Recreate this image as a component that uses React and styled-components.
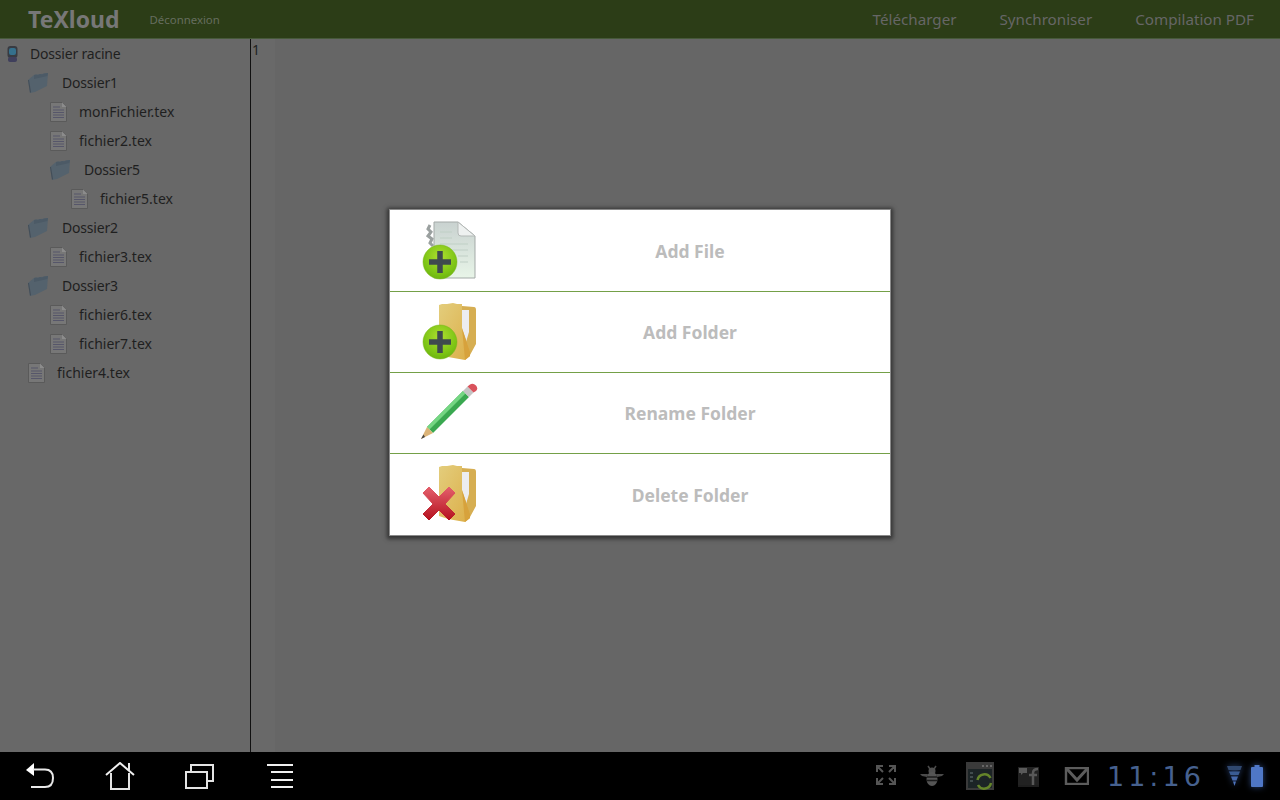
import React from "react";
import styled, { createGlobalStyle } from "styled-components";

const GlobalStyle = createGlobalStyle`
  html, body {
    margin: 0;
    padding: 0;
    height: 100%;
    background: #666;
    font-family: "Noto Sans", "Open Sans", sans-serif;
  }
  #root {
    height: 100%;
  }
`;

const tree = [
  { depth: 0, type: "root", name: "Dossier racine" },
  { depth: 1, type: "folder", name: "Dossier1" },
  { depth: 2, type: "file", name: "monFichier.tex" },
  { depth: 2, type: "file", name: "fichier2.tex" },
  { depth: 2, type: "folder", name: "Dossier5" },
  { depth: 3, type: "file", name: "fichier5.tex" },
  { depth: 1, type: "folder", name: "Dossier2" },
  { depth: 2, type: "file", name: "fichier3.tex" },
  { depth: 1, type: "folder", name: "Dossier3" },
  { depth: 2, type: "file", name: "fichier6.tex" },
  { depth: 2, type: "file", name: "fichier7.tex" },
  { depth: 1, type: "file", name: "fichier4.tex" },
];

const RootIcon = () => (
  <svg width="15" height="18" viewBox="0 0 15 18">
    <rect x="2.5" y="1" width="10" height="12" rx="3" fill="#383b42" />
    <rect x="4" y="3" width="7" height="7" rx="2" fill="#35708c" />
    <rect x="3" y="12" width="9" height="5" rx="2" fill="#3f3f5c" />
  </svg>
);

const SmallFolderIcon = () => (
  <svg width="22" height="22" viewBox="0 0 22 22">
    <path d="M1 8 L7 3 L21 1 L20 14 L8 20 L3 21 Z" fill="#54626d" />
    <path d="M7 3 L9 2.5 L11 3 L13 2 L15 2.4 L17 1.5 L21 1 L20.4 4 L7 7 Z" fill="#4c5a66" />
    <path d="M1 8 L2 8 L4 20 L3 21 Z" fill="#434e58" />
  </svg>
);

const SmallFileIcon = () => (
  <svg width="17" height="20" viewBox="0 0 17 20">
    <path d="M0.5 0.5 H12 L16.5 5 V19.5 H0.5 Z" fill="#777" stroke="#5a5a5a" />
    <path d="M12 0.5 V5 H16.5 Z" fill="#8c8c8c" />
    <path d="M3 5 H10 M3 8 H14 M3 10.5 H14 M3 13 H14 M3 15.5 H14" stroke="#56566a" strokeWidth="1" />
  </svg>
);

const treeIcons = { root: RootIcon, folder: SmallFolderIcon, file: SmallFileIcon };

const PlusBadge = ({ cy }) => (
  <g>
    <circle cx="20" cy={cy} r="17" fill="url(#greenBall)" stroke="#78b41c" strokeWidth="0.5" />
    <path d={`M9 ${cy} H31 M20 ${cy - 11} V${cy + 11}`} stroke="#3f4a4e" strokeWidth="5.5" />
  </g>
);

const Defs = () => (
  <defs>
    <radialGradient id="greenBall" cx="50%" cy="35%" r="70%">
      <stop offset="0%" stopColor="#aede30" />
      <stop offset="70%" stopColor="#7cc414" />
      <stop offset="100%" stopColor="#68b00e" />
    </radialGradient>
    <linearGradient id="folderFront" x1="0" y1="0" x2="1" y2="1">
      <stop offset="0%" stopColor="#e3cd7c" />
      <stop offset="100%" stopColor="#dcae48" />
    </linearGradient>
    <linearGradient id="sheet" x1="0" y1="0" x2="0" y2="1">
      <stop offset="0%" stopColor="#c9d2d0" />
      <stop offset="100%" stopColor="#e8f5e8" />
    </linearGradient>
    <linearGradient id="redCross" x1="0" y1="0" x2="0" y2="1">
      <stop offset="0%" stopColor="#e4606c" />
      <stop offset="100%" stopColor="#b5121f" />
    </linearGradient>
  </defs>
);

const AddFileIcon = () => (
  <svg width="60" height="62" viewBox="0 0 60 62">
    <Defs />
    <path d="M10 4 L8 8 L11 11 L8 15 L12 18 L10 22 L13 25" fill="none" stroke="#9aa09f" strokeWidth="3" />
    <path d="M14 1 H38 L55 15 V57 H14 Z" fill="url(#sheet)" stroke="#a3a9a7" />
    <path d="M38 1 L55 15 H41 Q38 15 38 12 Z" fill="#eef1f0" stroke="#b4b9b7" />
    <path d="M20 11 H32 M20 17 H32 M20 23 H48 M20 29 H48 M38 35 H48 M40 41 H48" stroke="#bfcfc5" strokeWidth="1.2" />
    <PlusBadge cy={41} />
  </svg>
);

const FolderShape = () => (
  <g>
    <path d="M42 4 L54 5 Q56 5 56 8 V42 L50 53 L42 40 Z" fill="#d6ae52" />
    <path d="M42 8 H49 V30 L46 40 H42 Z" fill="#ecedf0" />
    <path d="M19 3 L22 2 L27 2 L33 1 L37 2 L42 2 V26 L50 50 V54 L45 58 L28 55 L19 52 Z" fill="url(#folderFront)" />
    <path d="M42 26 L50 50 V54 L45 58 Z" fill="#d7a23c" />
  </g>
);

const AddFolderIcon = () => (
  <svg width="60" height="62" viewBox="0 0 60 62">
    <Defs />
    <FolderShape />
    <PlusBadge cy={40} />
  </svg>
);

const PencilIcon = () => (
  <svg width="60" height="62" viewBox="0 0 60 62">
    <path d="M7 44 L43 8 L49 14 L13 50 Z" fill="#3aa850" />
    <path d="M7 44 L43 8 L45.5 10.5 L9.5 46.5 Z" fill="#74d682" />
    <path d="M7 44 L13 50 L1 56 Z" fill="#dcb478" />
    <path d="M3.5 51.5 L5 54 L1 56 Z" fill="#444" />
    <path d="M43 8 L47.5 3.5 L53.5 9.5 L49 14 Z" fill="#c4c4c4" />
    <path d="M47.5 3.5 L50 1.5 Q53 -0.5 56 2.5 Q58.5 5.5 56 8 L53.5 9.5 Z" fill="#d9535c" />
  </svg>
);

const DeleteFolderIcon = () => (
  <svg width="60" height="62" viewBox="0 0 60 62">
    <Defs />
    <FolderShape />
    <path
      d="M3 29 L9 23 L19 33 L29 23 L35 29 L25 40 L35 50 L29 56 L19 46 L9 56 L3 50 L13 40 Z"
      fill="url(#redCross)"
      stroke="url(#redCross)"
      strokeLinejoin="round"
    />
  </svg>
);

const menuItems = [
  { label: "Add File", Icon: AddFileIcon },
  { label: "Add Folder", Icon: AddFolderIcon },
  { label: "Rename Folder", Icon: PencilIcon },
  { label: "Delete Folder", Icon: DeleteFolderIcon },
];

const BackIcon = () => (
  <svg width="30" height="28" viewBox="0 0 30 28">
    <path d="M1 8 L9 1 V14 Z" fill="#fff" />
    <path d="M8 7.5 H20 Q28 7.5 28 16 Q28 25 20 25 H6" fill="none" stroke="#e8e8e8" strokeWidth="2" />
  </svg>
);

const HomeIcon = () => (
  <svg width="30" height="28" viewBox="0 0 30 28">
    <path d="M1 13 L15 1 L29 13" fill="none" stroke="#f0f0f0" strokeWidth="2" />
    <path d="M6 11 V27 H24 V11 M24 8 V1" fill="none" stroke="#e4e4e4" strokeWidth="2" />
  </svg>
);

const RecentIcon = () => (
  <svg width="30" height="26" viewBox="0 0 30 26">
    <rect x="1" y="9" width="21" height="16" fill="none" stroke="#e4e4e4" strokeWidth="2" />
    <path d="M6 8 V2 H28 V18 H23" fill="none" stroke="#e4e4e4" strokeWidth="2" />
  </svg>
);

const MenuIcon = () => (
  <svg width="26" height="26" viewBox="0 0 26 26">
    <path d="M0 2 H26 M4 9 H26 M4 17 H26 M4 24 H26" stroke="#f0f0f0" strokeWidth="2" />
  </svg>
);

const ExpandIcon = () => (
  <svg width="22" height="22" viewBox="0 0 22 22">
    <path d="M1 7 V1 H7 M13 1 H19 V7 M1 13 V19 H7 M13 19 H19 V13 M1 1 L7 7 M19 1 L13 7 M1 19 L7 13 M19 19 L13 13" fill="none" stroke="#555" strokeWidth="2" />
  </svg>
);

const BugIcon = () => (
  <svg width="24" height="22" viewBox="0 0 24 22">
    <path d="M0 9 H8 L7 12 L2 11 Z M24 9 H16 L17 12 L22 11 Z" fill="#4a4a4a" />
    <path d="M8 1 L10 4 M16 1 L14 4" stroke="#4a4a4a" strokeWidth="1.5" />
    <circle cx="12" cy="6" r="3.5" fill="#505050" />
    <ellipse cx="12" cy="14" rx="5.5" ry="7" fill="#555" />
    <path d="M7 12 H17 M7 15.5 H17" stroke="#1b1b1b" strokeWidth="1.5" />
  </svg>
);

const SyncIcon = () => (
  <svg width="28" height="28" viewBox="0 0 28 28">
    <rect x="0" y="0" width="28" height="28" fill="#3a3a3a" />
    <rect x="2" y="7" width="24" height="19" fill="#1c2426" />
    <path d="M16 4 H18 M20 4 H22 M24 4 H26" stroke="#777" strokeWidth="1.5" />
    <path d="M4 11 H7 M4 15 H7 M4 19 H7" stroke="#4d5a5c" strokeWidth="1.5" />
    <path d="M11.5 18 A7 7 0 0 1 24.5 16" fill="none" stroke="#64842a" strokeWidth="2.5" />
    <path d="M25 21 A7 7 0 0 1 12 23" fill="none" stroke="#64842a" strokeWidth="2.5" />
  </svg>
);

const FacebookIcon = () => (
  <svg width="23" height="22" viewBox="0 0 23 22">
    <rect x="2" y="2" width="21" height="18" fill="#222" />
    <path d="M3 3 H11 V8 H7 L5 10 V8 H3 Z" fill="#5a5a5a" />
    <path d="M17 20 V8 Q17 4 22 4 M13 10 H21" fill="none" stroke="#585858" strokeWidth="2.5" />
    <path d="M2 21 H23" stroke="#3c3c3c" />
  </svg>
);

const MailIcon = () => (
  <svg width="28" height="18" viewBox="0 0 28 18">
    <rect x="5" y="1" width="22" height="16" fill="none" stroke="#5c5c5c" strokeWidth="2.4" />
    <path d="M6 2 L16 13 L26 2" fill="none" stroke="#5c5c5c" strokeWidth="3" />
  </svg>
);

const SignalIcon = () => (
  <svg width="15" height="20" viewBox="0 0 15 20">
    <path d="M0 0 H15 L13.5 4 H1.5 Z" fill="#30486f" />
    <path d="M2 5.5 H13 L11.5 9 H3.5 Z" fill="#3a5c94" />
    <path d="M4 10.5 H11 L9.5 14.5 H5.5 Z" fill="#4669ad" />
    <path d="M6 15.5 H9 L7.5 20 Z" fill="#4f75c0" />
  </svg>
);

const BatteryIcon = () => (
  <svg width="12" height="22" viewBox="0 0 12 22">
    <rect x="3.5" y="0" width="5" height="2" fill="#4f77c6" />
    <rect x="0" y="2" width="12" height="20" rx="1" fill="#4f77c6" />
  </svg>
);

const App = () => (
  <>
    <GlobalStyle />
    <Page>
      <Header>
        <Brand>
          <Logo>TeXloud</Logo>
          <Logout>Déconnexion</Logout>
        </Brand>
        <Nav>
          <NavLink>Télécharger</NavLink>
          <NavLink>Synchroniser</NavLink>
          <NavLink>Compilation PDF</NavLink>
        </Nav>
      </Header>
      <Main>
        <Sidebar>
          {tree.map((node) => {
            const Icon = treeIcons[node.type];
            return (
              <TreeRow key={node.name} $depth={node.depth} $type={node.type}>
                <TreeIcon $type={node.type}>
                  <Icon />
                </TreeIcon>
                {node.name}
              </TreeRow>
            );
          })}
        </Sidebar>
        <Editor>
          <Gutter>1</Gutter>
        </Editor>
      </Main>
      <SystemBar>
        <SoftKeys>
          <SoftKey>
            <BackIcon />
          </SoftKey>
          <SoftKey>
            <HomeIcon />
          </SoftKey>
          <SoftKey>
            <RecentIcon />
          </SoftKey>
          <SoftKey>
            <MenuIcon />
          </SoftKey>
        </SoftKeys>
        <Tray>
          <Notifications>
            <ExpandIcon />
            <BugIcon />
            <SyncIcon />
            <FacebookIcon />
            <MailIcon />
          </Notifications>
          <Clock>11:16</Clock>
          <Status>
            <SignalIcon />
            <BatteryIcon />
          </Status>
        </Tray>
      </SystemBar>
      <Modal>
        {menuItems.map(({ label, Icon }) => (
          <MenuRow key={label}>
            <MenuIcons>
              <Icon />
            </MenuIcons>
            <MenuLabel>{label}</MenuLabel>
          </MenuRow>
        ))}
      </Modal>
    </Page>
  </>
);

const Page = styled.div`
  position: relative;
  display: flex;
  flex-direction: column;
  width: 1280px;
  height: 800px;
  overflow: hidden;
  background: #666;
`;

const Header = styled.header`
  display: flex;
  align-items: center;
  justify-content: space-between;
  height: 38px;
  padding: 0 26px 0 28px;
  background: #2c3d17;
  border-bottom: 1px solid #47593a;
  flex-shrink: 0;
`;

const Brand = styled.div`
  display: flex;
  align-items: center;
  gap: 30px;
`;

const Logo = styled.div`
  font-size: 23px;
  font-weight: 700;
  color: #777;
`;

const Logout = styled.div`
  font-size: 11.4px;
  color: #666d5f;
`;

const Nav = styled.nav`
  display: flex;
  gap: 43px;
`;

const NavLink = styled.div`
  font-size: 15.2px;
  color: #666;
`;

const Main = styled.main`
  display: flex;
  flex: 1;
  min-height: 0;
`;

const Sidebar = styled.aside`
  width: 250px;
  background: #686868;
  border-right: 1px solid #111;
  flex-shrink: 0;
`;

const fileIndent = { 1: 28, 2: 50, 3: 71 };

const indent = ({ $type, $depth }) => {
  if ($type === "root") return 5;
  if ($type === "file") return fileIndent[$depth];
  return ($depth - 1) * 22 + 27;
};

const TreeRow = styled.div`
  display: flex;
  align-items: center;
  height: 29px;
  padding-left: ${indent}px;
  font-size: 14px;
  letter-spacing: ${(p) => (p.$type === "file" ? 0 : -0.2)}px;
  color: #1f1f1f;
`;

const TreeIcon = styled.span`
  display: flex;
  align-items: center;
  justify-content: center;
  margin-right: ${(p) => (p.$type === "root" ? 10 : p.$type === "folder" ? 13 : 12)}px;
`;

const Editor = styled.div`
  flex: 1;
  background: #666;
`;

const Gutter = styled.div`
  width: 24px;
  height: 100%;
  padding: 3px 0 0 1px;
  box-sizing: border-box;
  font-size: 14px;
  line-height: 16px;
  color: #222;
  background: #696969;
`;

const SystemBar = styled.footer`
  display: flex;
  align-items: center;
  justify-content: space-between;
  height: 48px;
  background: #000;
  flex-shrink: 0;
`;

const SoftKeys = styled.div`
  display: flex;
  align-items: center;
`;

const SoftKey = styled.div`
  display: flex;
  align-items: center;
  justify-content: center;
  width: 80px;
  height: 48px;
`;

const Tray = styled.div`
  display: flex;
  align-items: center;
  padding-right: 17px;
`;

const Notifications = styled.div`
  display: flex;
  align-items: center;
  gap: 22px;
`;

const Clock = styled.div`
  width: 100px;
  margin-left: 18px;
  font-family: "DejaVu Sans", sans-serif;
  font-size: 27px;
  letter-spacing: 4px;
  white-space: nowrap;
  color: #46618f;
`;

const Status = styled.div`
  display: flex;
  align-items: center;
  gap: 9px;
  margin-left: 20px;
  filter: drop-shadow(0 0 3px #2a4578);
`;

const Modal = styled.div`
  position: absolute;
  left: 390px;
  top: 210px;
  width: 500px;
  padding-top: 1px;
  background: #fff;
  box-shadow: 0 0 0 1px #8a8a8a, 0 1px 4px 3px #333;
`;

const MenuRow = styled.div`
  position: relative;
  display: flex;
  align-items: center;
  justify-content: center;
  height: 81px;
  padding-left: 100px;
  box-sizing: border-box;
  border-bottom: 1px solid #74a048;

  &:last-child {
    border-bottom: 0;
  }
`;

const MenuIcons = styled.div`
  position: absolute;
  left: 30px;
  top: 10px;
  display: flex;
`;

const MenuLabel = styled.div`
  font-size: 17.5px;
  font-weight: 700;
  color: #bcbcbc;
`;

export default App;
